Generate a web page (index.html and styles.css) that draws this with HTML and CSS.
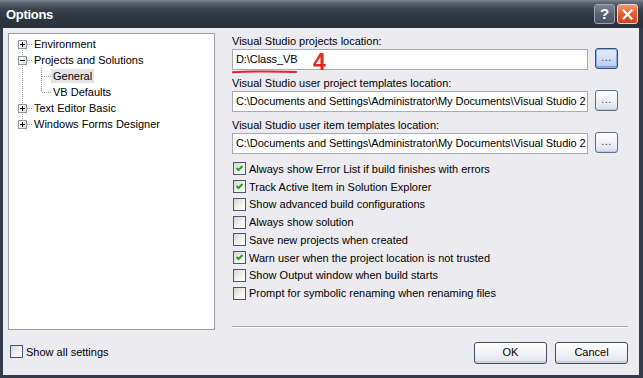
FILE: index.html
```html
<!DOCTYPE html>
<html>
<head>
<meta charset="utf-8">
<title>Options</title>
<link rel="stylesheet" href="styles.css">
</head>
<body>
<div class="window">
  <div class="titlebar">
    <span class="title">Options</span>
    <div class="tb-btns">
      <div class="tb-btn help">?</div>
      <div class="tb-btn close">
        <svg width="11" height="11" viewBox="0 0 11 11"><path d="M1.5 1.5 L9.5 9.5 M9.5 1.5 L1.5 9.5" stroke="#fff" stroke-width="2.2" stroke-linecap="square"/></svg>
      </div>
    </div>
  </div>
  <div class="client">
    <div class="main">
      <div class="tree">
        <div class="node">
          <span class="gut v-bottom"><span class="exp"><svg width="7" height="7" viewBox="0 0 7 7"><path d="M1 3.5 H6 M3.5 1 V6" stroke="#000" stroke-width="1"/></svg></span></span>
          <span class="hl"></span>
          <span class="lbl">Environment</span>
        </div>
        <div class="node">
          <span class="gut v-full"><span class="exp"><svg width="7" height="7" viewBox="0 0 7 7"><path d="M1 3.5 H6" stroke="#000" stroke-width="1"/></svg></span></span>
          <span class="hl"></span>
          <span class="lbl">Projects and Solutions</span>
        </div>
        <div class="node">
          <span class="gut v-full"></span>
          <span class="spacer"></span>
          <span class="conn conn-full"></span>
          <span class="lbl sel">General</span>
        </div>
        <div class="node">
          <span class="gut v-full"></span>
          <span class="spacer"></span>
          <span class="conn conn-last"></span>
          <span class="lbl">VB Defaults</span>
        </div>
        <div class="node">
          <span class="gut v-full"><span class="exp"><svg width="7" height="7" viewBox="0 0 7 7"><path d="M1 3.5 H6 M3.5 1 V6" stroke="#000" stroke-width="1"/></svg></span></span>
          <span class="hl"></span>
          <span class="lbl">Text Editor Basic</span>
        </div>
        <div class="node">
          <span class="gut v-top"><span class="exp"><svg width="7" height="7" viewBox="0 0 7 7"><path d="M1 3.5 H6 M3.5 1 V6" stroke="#000" stroke-width="1"/></svg></span></span>
          <span class="hl"></span>
          <span class="lbl">Windows Forms Designer</span>
        </div>
      </div>
      <div class="pane">
        <div class="field">
          <div class="field-label">Visual Studio projects location:</div>
          <div class="field-row">
            <div class="textbox">D:\Class_VB</div>
            <div class="browse focus">...</div>
            <span class="anno-4">4</span>
            <svg class="anno-line" width="66" height="4" viewBox="0 0 66 4"><path d="M0.5 2.2 Q32 0.8 64 2" stroke="#e5242b" stroke-width="2" fill="none" stroke-linecap="round"/></svg>
          </div>
        </div>
        <div class="field">
          <div class="field-label">Visual Studio user project templates location:</div>
          <div class="field-row">
            <div class="textbox">C:\Documents and Settings\Administrator\My Documents\Visual Studio 2</div>
            <div class="browse">...</div>
          </div>
        </div>
        <div class="field">
          <div class="field-label">Visual Studio user item templates location:</div>
          <div class="field-row">
            <div class="textbox">C:\Documents and Settings\Administrator\My Documents\Visual Studio 2</div>
            <div class="browse">...</div>
          </div>
        </div>
        <div class="checks">
          <div class="check"><span class="cb"><svg width="11" height="11" viewBox="0 0 11 11"><path d="M2.5 5 L4.5 7 L8.5 3" stroke="#21a121" stroke-width="2" fill="none"/></svg></span><span>Always show Error List if build finishes with errors</span></div>
          <div class="check"><span class="cb"><svg width="11" height="11" viewBox="0 0 11 11"><path d="M2.5 5 L4.5 7 L8.5 3" stroke="#21a121" stroke-width="2" fill="none"/></svg></span><span>Track Active Item in Solution Explorer</span></div>
          <div class="check"><span class="cb"></span><span>Show advanced build configurations</span></div>
          <div class="check"><span class="cb"></span><span>Always show solution</span></div>
          <div class="check"><span class="cb"></span><span>Save new projects when created</span></div>
          <div class="check"><span class="cb"><svg width="11" height="11" viewBox="0 0 11 11"><path d="M2.5 5 L4.5 7 L8.5 3" stroke="#21a121" stroke-width="2" fill="none"/></svg></span><span>Warn user when the project location is not trusted</span></div>
          <div class="check"><span class="cb"></span><span>Show Output window when build starts</span></div>
          <div class="check"><span class="cb"></span><span>Prompt for symbolic renaming when renaming files</span></div>
        </div>
        <div class="sep"></div>
      </div>
    </div>
    <div class="footer">
      <div class="check show-all"><span class="cb"></span><span>Show all settings</span></div>
      <div class="buttons">
        <div class="btn">OK</div>
        <div class="btn">Cancel</div>
      </div>
    </div>
  </div>
</div>
</body>
</html>
```
FILE: styles.css
```css
html, body {
  margin: 0;
  padding: 0;
}
body {
  font: 11px "Liberation Sans", Arial, sans-serif;
  color: #000;
  background: #323b47;
}
.window {
  width: 643px;
  height: 378px;
  display: flex;
  flex-direction: column;
  overflow: hidden;
  background: #323b47;
}
.titlebar {
  height: 28px;
  flex: none;
  display: flex;
  align-items: center;
  justify-content: space-between;
  padding: 0 5px 0 6px;
  background: linear-gradient(#7d858f 0px, #59626d 3px, #3a434f 9px, #2d3540 18px, #29313b 28px);
}
.title {
  color: #fff;
  font: bold 13px "Liberation Sans", Arial, sans-serif;
  letter-spacing: -0.3px;
}
.tb-btns {
  display: flex;
  gap: 2px;
}
.tb-btn {
  width: 21px;
  height: 20px;
  box-sizing: border-box;
  border-radius: 3px;
  display: flex;
  align-items: center;
  justify-content: center;
}
.help {
  border: 1px solid #9aa3ae;
  background: linear-gradient(#7a8592, #5a6574 50%, #4a5462);
  color: #fff;
  font: bold 15px "Liberation Sans", Arial, sans-serif;
  line-height: 18px;
}
.close {
  border: 1px solid #f2d6cc;
  background: linear-gradient(#f09a78, #e35f36 45%, #cf4420);
}
.client {
  flex: 1;
  display: flex;
  flex-direction: column;
  background: #ecebf0;
  border-style: solid;
  border-color: #323b47;
  border-width: 0 4px 3px 3px;
  padding: 5px 11px 0 5px;
}
.main {
  display: flex;
  gap: 17px;
  height: 297px;
  flex: none;
}
.tree {
  width: 207px;
  box-sizing: border-box;
  background: #fff;
  border: 1px solid #989ca3;
  padding-top: 2px;
}
.node {
  height: 16px;
  display: flex;
  align-items: center;
  padding-left: 9px;
}
.gut {
  width: 9px;
  height: 16px;
  flex: none;
  display: flex;
  align-items: center;
  background-image: repeating-linear-gradient(to bottom, #a0a0a0 0 1px, transparent 1px 2px);
  background-repeat: no-repeat;
}
.v-full { background-size: 1px 16px; background-position: 4px 0; }
.v-top { background-size: 1px 8px; background-position: 4px 0; }
.v-bottom { background-size: 1px 8px; background-position: 4px 8px; }
.exp {
  width: 9px;
  height: 9px;
  box-sizing: border-box;
  border: 1px solid #8a96a4;
  background: linear-gradient(135deg, #ffffff 30%, #d8d8d0);
  display: flex;
}
.hl {
  width: 5px;
  height: 16px;
  flex: none;
  background-image: repeating-linear-gradient(to right, #a0a0a0 0 1px, transparent 1px 2px);
  background-size: 100% 1px;
  background-position: 0 8px;
  background-repeat: no-repeat;
}
.spacer {
  width: 10px;
  flex: none;
}
.conn {
  width: 14px;
  height: 16px;
  flex: none;
  background-image:
    repeating-linear-gradient(to bottom, #a0a0a0 0 1px, transparent 1px 2px),
    repeating-linear-gradient(to right, #a0a0a0 0 1px, transparent 1px 2px);
  background-repeat: no-repeat;
  background-position: 4px 0, 5px 8px;
}
.conn-full { background-size: 1px 16px, 9px 1px; }
.conn-last { background-size: 1px 8px, 9px 1px; }
.lbl {
  padding: 0 2px;
  line-height: 14px;
  white-space: nowrap;
}
.lbl.sel {
  background: #e4e4e6;
}
.pane {
  width: 396px;
  display: flex;
  flex-direction: column;
  padding-top: 2px;
}
.field {
  display: flex;
  flex-direction: column;
}
.field + .field {
  margin-top: 7px;
}
.field-label {
  line-height: 13px;
  margin-bottom: 1px;
  white-space: nowrap;
}
.field-row {
  display: flex;
  gap: 7px;
  position: relative;
}
.textbox {
  width: 356px;
  height: 21px;
  box-sizing: border-box;
  border: 1px solid #a5acb5;
  background: #fff;
  padding: 0 2px 0 3px;
  line-height: 19px;
  white-space: nowrap;
  overflow: hidden;
  letter-spacing: -0.07px;
}
.browse {
  width: 23px;
  height: 21px;
  box-sizing: border-box;
  margin-top: -1px;
  border: 1px solid #5a6f90;
  border-radius: 3px;
  background: linear-gradient(#ffffff, #eef0f6 55%, #d9dde8);
  box-shadow: inset 0 -1px 0 #c4c9d6;
  color: #1e3560;
  text-align: center;
  line-height: 17px;
  letter-spacing: 0.5px;
}
.browse.focus {
  border-color: #2f4f84;
  background: linear-gradient(#e4ecfb, #d0dcf3 55%, #b9c9ea);
  box-shadow: inset 0 0 0 1px #8eaee6, inset 0 -2px 0 #7d9fde;
}
.anno-4 {
  position: absolute;
  left: 81px;
  top: 2px;
  color: #e5242b;
  font: bold 23px "Liberation Sans", Arial, sans-serif;
  line-height: 23px;
}
.anno-line {
  position: absolute;
  left: 0;
  top: 21px;
}
.checks {
  margin-top: 6px;
  display: flex;
  flex-direction: column;
}
.check {
  height: 17.75px;
  display: flex;
  align-items: center;
  gap: 3px;
  padding-left: 1px;
  white-space: nowrap;
}
.cb {
  width: 13px;
  height: 13px;
  box-sizing: border-box;
  flex: none;
  border: 1px solid #40587a;
  background: linear-gradient(135deg, #d6d6d0, #f4f4f2 60%, #ffffff);
  display: flex;
}
.sep {
  margin-top: auto;
  margin-bottom: 2px;
  height: 1px;
  background: #a7a6ab;
  border-bottom: 1px solid #ffffff;
}
.footer {
  display: flex;
  align-items: center;
  justify-content: space-between;
  margin-top: 12px;
  height: 22px;
}
.show-all {
  padding-left: 2px;
  margin-bottom: 3px;
}
.buttons {
  display: flex;
  gap: 8px;
}
.btn {
  width: 73px;
  height: 22px;
  box-sizing: border-box;
  border: 1px solid #434e61;
  border-radius: 3px;
  background: linear-gradient(#ffffff, #f3f3f6 50%, #e2e2ea);
  box-shadow: inset 0 -2px 0 #cfd0da;
  text-align: center;
  line-height: 19px;
}
```
